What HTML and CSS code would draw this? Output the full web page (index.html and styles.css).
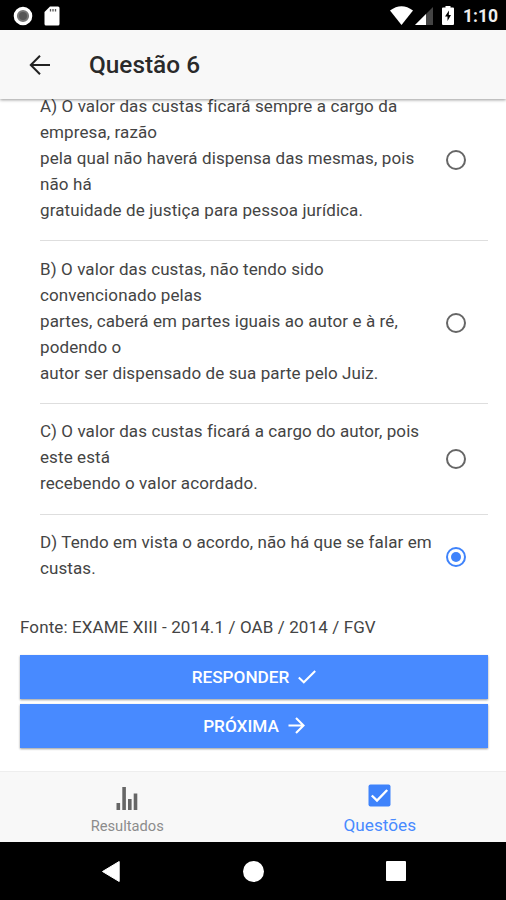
FILE: index.html
```html
<!DOCTYPE html>
<html lang="pt-br">
<head>
    <meta charset="UTF-8">
    <meta name="viewport" content="width=device-width, initial-scale=1.0">
    <title>Questão 6</title>
    <link rel="stylesheet" href="styles.css">
</head>
<body>
    <div class="status">
        <svg class="gravando" width="20" height="20" viewBox="0 0 20 20">
            <circle cx="10" cy="10" r="7.7" fill="#777" stroke="#fff" stroke-width="3.2"/>
            <circle cx="10" cy="10" r="4" fill="#555"/>
        </svg>
        <svg class="cartao" width="16" height="20" viewBox="0 0 16 20">
            <path d="M6 0.5H14Q15.5 0.5 15.5 2V18Q15.5 19.5 14 19.5H2Q0.5 19.5 0.5 18V6Z" fill="#fff"/>
            <path d="M6.500 3v2.500M9 3v2.500M11.500 3v2.500" stroke="#555" stroke-width="1.300"/>
        </svg>
        <svg class="wifi" width="23" height="19" viewBox="0 0 23 19">
            <path d="M0 4.5Q11.500-4 23 4.500L11.500 19Z" fill="#fff"/>
        </svg>
        <svg class="sinal" width="18" height="18" viewBox="0 0 18 18">
            <path d="M18 0V18H0Z" fill="#444"/>
            <path d="M11 7V18H0Z" fill="#fff"/>
        </svg>
        <svg class="bateria" width="12" height="19" viewBox="0 0 12 19">
            <path d="M3.500 0H8.500V1.500H11Q12 1.500 12 2.500V18Q12 19 11 19H1Q0 19 0 18V2.500Q0 1.500 1 1.500H3.500Z" fill="#fff"/>
            <path d="M7 4.500L3 10.500H5.500V15L9 9H6.800Z" fill="#000"/>
        </svg>
        <span class="hora">1:10</span>
    </div>
    <header>
        <svg class="voltar" width="22" height="22" viewBox="0 0 22 22">
            <path d="M21 11H2M11 1.800L1.800 11L11 20.200" fill="none" stroke="#222" stroke-width="2"/>
        </svg>
        <h1>Questão 6</h1>
    </header>
    <main>
        <ul class="opcoes">
            <li class="opcao">
                <p>A) O valor das custas ficará sempre a cargo da<br>empresa, razão<br>pela qual não haverá dispensa das mesmas, pois<br>não há<br>gratuidade de justiça para pessoa jurídica.</p>
                <span class="radio"></span>
            </li>
            <li class="opcao">
                <p>B) O valor das custas, não tendo sido<br>convencionado pelas<br>partes, caberá em partes iguais ao autor e à ré,<br>podendo o<br>autor ser dispensado de sua parte pelo Juiz.</p>
                <span class="radio"></span>
            </li>
            <li class="opcao">
                <p>C) O valor das custas ficará a cargo do autor, pois<br>este está<br>recebendo o valor acordado.</p>
                <span class="radio"></span>
            </li>
            <li class="opcao">
                <p>D) Tendo em vista o acordo, não há que se falar em<br>custas.</p>
                <span class="radio marcado"></span>
            </li>
        </ul>
        <p class="fonte">Fonte: EXAME XIII - 2014.1 / OAB / 2014 / FGV</p>
        <div class="botoes">
            <button>RESPONDER
                <svg width="18" height="14" viewBox="0 0 18 14">
                    <path d="M0.800 7.500L5.800 12.300L17.200 1" fill="none" stroke="#fff" stroke-width="2"/>
                </svg>
            </button>
            <button>PRÓXIMA
                <svg width="17" height="17" viewBox="0 0 17 17">
                    <path d="M0.500 8.500H15M8 1L15.500 8.500L8 16" fill="none" stroke="#fff" stroke-width="2.100"/>
                </svg>
            </button>
        </div>
    </main>
    <nav class="abas">
        <div class="aba">
            <svg width="22" height="23" viewBox="0 0 22 23">
                <path d="M0.500 16h3.600v7H0.500zM6.300 0h3.600v23H6.300zM12 12h3.600v11H12zM17.700 6.500h3.600V23h-3.600z" fill="#666"/>
            </svg>
            <span>Resultados</span>
        </div>
        <div class="aba ativa">
            <svg width="23" height="23" viewBox="0 0 23 23">
                <rect x="0.500" y="0.500" width="22" height="22" rx="2" fill="#3f83fb"/>
                <path d="M3.800 11.500L9 16.500L19.200 6" fill="none" stroke="#fff" stroke-width="2.400"/>
            </svg>
            <span>Questões</span>
        </div>
    </nav>
    <footer>
        <svg width="18" height="21" viewBox="0 0 18 21">
            <path d="M17.200 0.500V20.500L0.500 10.500Z" fill="#fff" stroke="#fff" stroke-linejoin="round"/>
        </svg>
        <span class="home"></span>
        <span class="recentes"></span>
    </footer>
</body>
</html>
```
FILE: styles.css
```css
*{
    box-sizing: border-box;
    margin: 0;
    padding: 0;
}
body{
    height: 900px;
    width: 506px;
    display: flex;
    flex-direction: column;
    overflow: hidden;
    background-color: white;
    color: #444;
    font-family: Roboto, sans-serif;
}
.status{
    height: 30px;
    flex: none;
    display: flex;
    align-items: center;
    padding: 1px 9px 0 13px;
    background-color: black;
}
.cartao{
    margin-left: 11px;
}
.wifi{
    margin-left: auto;
}
.sinal{
    margin-left: 2px;
}
.bateria{
    margin-left: 9px;
}
.hora{
    width: 34px;
    margin-left: 9px;
    color: #eee;
    font-size: 17.5px;
    font-weight: 700;
    line-height: 20px;
    white-space: nowrap;
}
header{
    height: 69px;
    flex: none;
    display: flex;
    align-items: center;
    padding-left: 29px;
    background-color: #f8f8f8;
    box-shadow: 0 1px 3px rgba(0,0,0,0.4);
    z-index: 1;
}
h1{
    margin-left: 38px;
    color: #2a2a2a;
    font-size: 24.4px;
    font-weight: 500;
}
main{
    flex: 1;
    min-height: 0;
    overflow: hidden;
    padding: 0 18px 0 20px;
}
.opcoes{
    list-style: none;
    margin-top: -22px;
    padding-left: 20px;
}
.opcao{
    display: flex;
    align-items: center;
    padding: 15px 22px 17px 0;
    border-bottom: 1px solid #dedede;
    font-size: 17px;
    line-height: 26px;
    letter-spacing: 0.1px;
}
.opcao:first-child{
    padding-top: 16px;
}
.opcao:nth-child(3){
    padding-top: 14px;
    padding-bottom: 18px;
}
.opcao:last-child{
    padding: 14px 22px 16px 0;
    border-bottom: none;
}
.opcao p{
    flex: 1;
    white-space: nowrap;
}
.radio{
    width: 20px;
    height: 20px;
    flex: none;
    display: flex;
    align-items: center;
    justify-content: center;
    margin-top: 3px;
    border: 2px solid #666;
    border-radius: 50%;
}
.marcado{
    border-color: #3f83fb;
}
.marcado::after{
    content: "";
    width: 10px;
    height: 10px;
    border-radius: 50%;
    background-color: #3f83fb;
}
.fonte{
    margin-top: 17px;
    font-size: 17px;
    line-height: 26px;
    letter-spacing: 0.11px;
}
.botoes{
    display: flex;
    flex-direction: column;
    gap: 5px;
    margin-top: 15px;
}
button{
    height: 44px;
    display: flex;
    align-items: center;
    justify-content: center;
    gap: 9px;
    padding-bottom: 1px;
    border: none;
    background-color: #488aff;
    box-shadow: 0 1px 2px rgba(0,0,0,0.4);
    color: white;
    font-family: Roboto, sans-serif;
    font-size: 17.2px;
    font-weight: 500;
}
.abas{
    height: 71px;
    flex: none;
    display: flex;
    padding-left: 1px;
    border-top: 1px solid #eee;
    background-color: #f8f8f8;
}
.aba{
    flex: 1;
    display: flex;
    flex-direction: column;
    align-items: center;
    padding-top: 15px;
    color: #8c8c8c;
    font-size: 14.7px;
}
.aba span{
    margin-top: 8px;
    line-height: 17px;
}
.ativa{
    padding-top: 12px;
    color: #488aff;
    font-size: 17.2px;
}
.ativa span{
    margin-top: 10px;
}
footer{
    height: 58px;
    flex: none;
    display: flex;
    align-items: center;
    justify-content: space-between;
    padding: 0 100px 0 102px;
    background-color: black;
}
.home{
    width: 21px;
    height: 21px;
    border-radius: 50%;
    background-color: white;
}
.recentes{
    width: 20px;
    height: 20px;
    border-radius: 1px;
    background-color: white;
}
```
